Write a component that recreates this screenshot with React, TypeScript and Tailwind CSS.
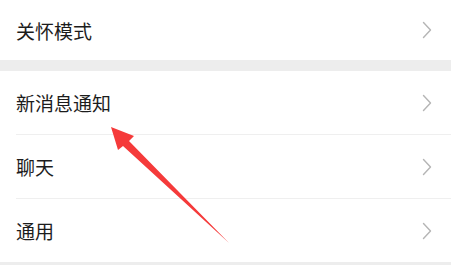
import React from "react";

const Chevron: React.FC = () => (
  <svg width="10" height="18" viewBox="0 0 10 18" fill="none" className="shrink-0">
    <path d="M1.5 1.5 L8.5 9 L1.5 16.5" stroke="#b5b5b5" strokeWidth="1.4" strokeLinecap="round" strokeLinejoin="round" />
  </svg>
);

const Row: React.FC<{ label: string; height: string; divider?: boolean }> = ({ label, height, divider }) => (
  <div className={`flex items-center bg-white pl-4 ${height}`}>
    <div className={`flex h-full flex-1 items-center pr-[19px] ${divider ? "border-b border-[#efefef]" : ""}`}>
      <span className="flex-1 text-[19px] leading-none text-[#1c1c1c]">{label}</span>
      <Chevron />
    </div>
  </div>
);

const App: React.FC = () => {
  return (
    <div
      className="relative h-[265px] w-[451px] overflow-hidden bg-white"
      style={{ fontFamily: '"Noto Sans CJK SC", "Noto Sans", sans-serif' }}
    >
      <Row label="关怀模式" height="h-[60px]" />
      <div className="h-[11px] bg-[#ededed]" />
      <Row label="新消息通知" height="h-[64px]" divider />
      <Row label="聊天" height="h-[64px]" divider />
      <Row label="通用" height="h-[63px]" />
      <div className="h-[3px] bg-[#ededed]" />

      {/* red annotation arrow */}
      <svg className="pointer-events-none absolute left-0 top-0" width="451" height="265" viewBox="0 0 451 265">
        <polygon
          points="111,127 134,136 129,141 229,243 123,146 118,150"
          fill="#f53a3a"
        />
      </svg>
    </div>
  );
};

export default App;
